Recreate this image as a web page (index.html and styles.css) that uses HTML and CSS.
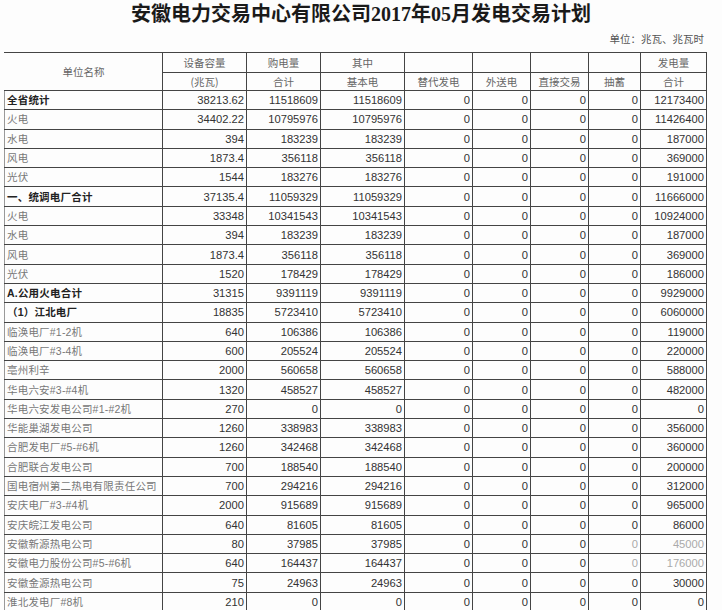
FILE: index.html
```html
<!DOCTYPE html>
<html lang="zh-CN">
<head>
<meta charset="utf-8">
<title>安徽电力交易中心有限公司2017年05月发电交易计划</title>
<link rel="stylesheet" href="styles.css">
</head>
<body>
<div class="page">
  <h1 class="title">安徽电力交易中心有限公司2017年05月发电交易计划</h1>
  <div class="unit">单位：兆瓦、兆瓦时</div>
  <table class="plan">
    <colgroup>
      <col class="c-name"><col class="c-cap"><col class="c-buy"><col class="c-base"><col class="c-sub"><col class="c-out"><col class="c-direct"><col class="c-pump"><col class="c-gen">
    </colgroup>
    <thead>
      <tr class="h1">
        <th rowspan="2" class="hname">单位名称</th>
        <th>设备容量</th><th>购电量</th><th>其中</th><th></th><th></th><th></th><th></th><th>发电量</th>
      </tr>
      <tr class="h2">
        <th>(兆瓦)</th><th>合计</th><th>基本电</th><th>替代发电</th><th>外送电</th><th>直接交易</th><th>抽蓄</th><th>合计</th>
      </tr>
    </thead>
    <tbody>
      <tr class="bold"><td>全省统计</td><td>38213.62</td><td>11518609</td><td>11518609</td><td>0</td><td>0</td><td>0</td><td>0</td><td>12173400</td></tr>
      <tr><td>火电</td><td>34402.22</td><td>10795976</td><td>10795976</td><td>0</td><td>0</td><td>0</td><td>0</td><td>11426400</td></tr>
      <tr><td>水电</td><td>394</td><td>183239</td><td>183239</td><td>0</td><td>0</td><td>0</td><td>0</td><td>187000</td></tr>
      <tr><td>风电</td><td>1873.4</td><td>356118</td><td>356118</td><td>0</td><td>0</td><td>0</td><td>0</td><td>369000</td></tr>
      <tr><td>光伏</td><td>1544</td><td>183276</td><td>183276</td><td>0</td><td>0</td><td>0</td><td>0</td><td>191000</td></tr>
      <tr class="bold"><td>一、统调电厂合计</td><td>37135.4</td><td>11059329</td><td>11059329</td><td>0</td><td>0</td><td>0</td><td>0</td><td>11666000</td></tr>
      <tr><td>火电</td><td>33348</td><td>10341543</td><td>10341543</td><td>0</td><td>0</td><td>0</td><td>0</td><td>10924000</td></tr>
      <tr><td>水电</td><td>394</td><td>183239</td><td>183239</td><td>0</td><td>0</td><td>0</td><td>0</td><td>187000</td></tr>
      <tr><td>风电</td><td>1873.4</td><td>356118</td><td>356118</td><td>0</td><td>0</td><td>0</td><td>0</td><td>369000</td></tr>
      <tr><td>光伏</td><td>1520</td><td>178429</td><td>178429</td><td>0</td><td>0</td><td>0</td><td>0</td><td>186000</td></tr>
      <tr class="bold"><td>A.公用火电合计</td><td>31315</td><td>9391119</td><td>9391119</td><td>0</td><td>0</td><td>0</td><td>0</td><td>9929000</td></tr>
      <tr class="bold"><td>（1）江北电厂</td><td>18835</td><td>5723410</td><td>5723410</td><td>0</td><td>0</td><td>0</td><td>0</td><td>6060000</td></tr>
      <tr><td>临涣电厂#1-2机</td><td>640</td><td>106386</td><td>106386</td><td>0</td><td>0</td><td>0</td><td>0</td><td>119000</td></tr>
      <tr><td>临涣电厂#3-4机</td><td>600</td><td>205524</td><td>205524</td><td>0</td><td>0</td><td>0</td><td>0</td><td>220000</td></tr>
      <tr><td>亳州利辛</td><td>2000</td><td>560658</td><td>560658</td><td>0</td><td>0</td><td>0</td><td>0</td><td>588000</td></tr>
      <tr><td>华电六安#3-#4机</td><td>1320</td><td>458527</td><td>458527</td><td>0</td><td>0</td><td>0</td><td>0</td><td>482000</td></tr>
      <tr><td>华电六安发电公司#1-#2机</td><td>270</td><td>0</td><td>0</td><td>0</td><td>0</td><td>0</td><td>0</td><td>0</td></tr>
      <tr><td>华能巢湖发电公司</td><td>1260</td><td>338983</td><td>338983</td><td>0</td><td>0</td><td>0</td><td>0</td><td>356000</td></tr>
      <tr><td>合肥发电厂#5-#6机</td><td>1260</td><td>342468</td><td>342468</td><td>0</td><td>0</td><td>0</td><td>0</td><td>360000</td></tr>
      <tr><td>合肥联合发电公司</td><td>700</td><td>188540</td><td>188540</td><td>0</td><td>0</td><td>0</td><td>0</td><td>200000</td></tr>
      <tr><td>国电宿州第二热电有限责任公司</td><td>700</td><td>294216</td><td>294216</td><td>0</td><td>0</td><td>0</td><td>0</td><td>312000</td></tr>
      <tr><td>安庆电厂#3-#4机</td><td>2000</td><td>915689</td><td>915689</td><td>0</td><td>0</td><td>0</td><td>0</td><td>965000</td></tr>
      <tr><td>安庆皖江发电公司</td><td>640</td><td>81605</td><td>81605</td><td>0</td><td>0</td><td>0</td><td>0</td><td>86000</td></tr>
      <tr><td>安徽新源热电公司</td><td>80</td><td>37985</td><td>37985</td><td>0</td><td>0</td><td>0</td><td class="faded">0</td><td class="faded">45000</td></tr>
      <tr><td>安徽电力股份公司#5-#6机</td><td>640</td><td>164437</td><td>164437</td><td>0</td><td>0</td><td>0</td><td class="faded">0</td><td class="faded">176000</td></tr>
      <tr><td>安徽金源热电公司</td><td>75</td><td>24963</td><td>24963</td><td>0</td><td>0</td><td>0</td><td>0</td><td>30000</td></tr>
      <tr><td>淮北发电厂#8机</td><td>210</td><td>0</td><td>0</td><td>0</td><td>0</td><td>0</td><td>0</td><td>0</td></tr>
    </tbody>
  </table>
</div>
</body>
</html>
```
FILE: styles.css
```css
html, body {
  margin: 0;
  padding: 0;
  background: #fdfdfd;
}

.page {
  width: 722px;
  height: 610px;
  overflow: hidden;
  padding-left: 4px;
  box-sizing: border-box;
}

.title {
  margin: 0;
  padding-top: 3px;
  height: 26px;
  font-family: "Liberation Serif", "Noto Sans CJK SC", serif;
  font-size: 20px;
  font-weight: bold;
  line-height: 22px;
  color: #1a1a1a;
  text-align: center;
  padding-right: 4px;
}

.unit {
  width: 700px;
  text-align: right;
  font-family: "Noto Sans CJK SC", sans-serif;
  font-size: 10.5px;
  line-height: 20px;
  height: 23px;
  color: #555;
}

.plan {
  border-collapse: collapse;
  table-layout: fixed;
  width: 702px;
  font-family: "Liberation Sans", "Noto Sans CJK SC", sans-serif;
}

.c-name { width: 158px; }
.c-cap { width: 84px; }
.c-buy { width: 74px; }
.c-base { width: 84px; }
.c-sub { width: 68px; }
.c-out { width: 58px; }
.c-direct { width: 58px; }
.c-pump { width: 52px; }
.c-gen { width: 66px; }

.plan th,
.plan td {
  border: 1px solid #444;
  padding: 0 2px;
  overflow: hidden;
  white-space: nowrap;
}

.plan th {
  font-weight: normal;
  font-family: "Noto Sans CJK SC", sans-serif;
  font-size: 10.5px;
  color: #666;
  text-align: center;
}

.plan th.hname {
  border-left-color: #fdfdfd;
}

.h1 th { height: 19px; }
.h2 th { height: 17px; }

.plan td {
  height: 18.3px;
  font-size: 11.2px;
  color: #333;
  text-align: right;
  line-height: 14px;
}

.plan td:first-child {
  text-align: left;
  font-size: 10.5px;
  color: #777;
  letter-spacing: 0.2px;
  border-left-color: #999;
}

.plan tr.bold td:first-child {
  font-weight: bold;
  color: #222;
}

.plan td.faded {
  color: #aaa;
}
```
